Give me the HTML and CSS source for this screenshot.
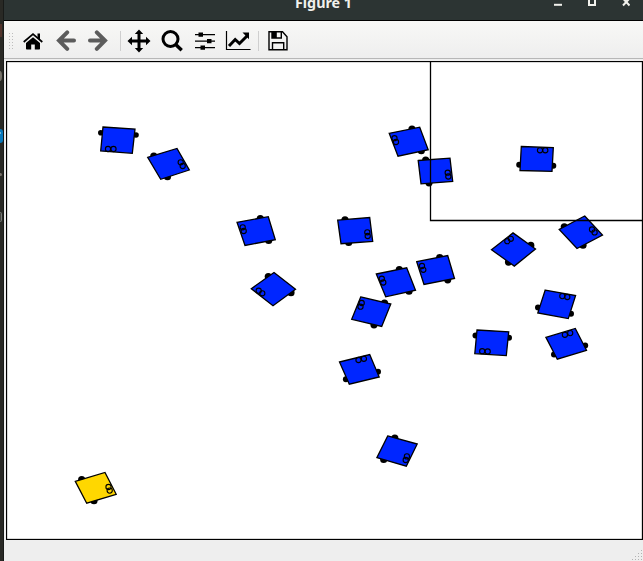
FILE: index.html
```
<!DOCTYPE html>
<html lang="en">
<head>
<meta charset="utf-8">
<title>Figure 1</title>
<link rel="stylesheet" href="styles.css">
</head>
<body>
<div class="desktop">
  <aside class="dock">
    <svg width="4" height="561" viewBox="0 0 4 561">
      <path d="M0 24h2v13H0z" fill="#51332b"/>
      <ellipse cx="0" cy="76" rx="2" ry="5" fill="#77736a"/>
      <rect x="-10" y="129" width="13" height="14" rx="3" fill="#0879bd"/>
      <path d="M0 133h1" stroke="#d8edf8"/>
      <circle cx="0.5" cy="174.500" r="1.500" fill="#77716a"/>
      <rect x="-7" y="212.500" width="8.500" height="9" rx="1" fill="#454541" stroke="#777a77"/>
    </svg>
  </aside>
  <main class="window">
    <header class="titlebar">
      <span class="title">Figure 1</span>
      <svg class="controls" width="76" height="10" viewBox="0 0 76 10" fill="none" stroke="#f1f1ec">
        <path d="M0 4.800h8" stroke-width="2"/>
        <path d="M35 -2v7h6v-7" stroke-width="2"/>
        <path d="M69 5.500l6.500-7M69 -1.500l6.500 7" stroke-width="2"/>
      </svg>
    </header>
    <nav class="toolbar">
      <svg class="grip" width="6" height="18" viewBox="0 0 6 18" stroke="#bdbdbd" stroke-dasharray="1 2"><path d="M1.500 1v17M4.500 1v17"/></svg>
      <svg class="icon home" width="22" height="22" viewBox="0 0 22 22">
        <path d="M11 7.300 4 13v5.700q0 .8.800.8h4.400v-5h3.600v5h4.400q.8 0 .8-.8V13z"/>
        <path d="M1.700 12 11 4.200l9.300 7.800" fill="none" stroke="#000" stroke-width="1.700"/>
        <path d="M15.500 3.500H18V10l-2.500-2.500z"/>
      </svg>
      <svg class="icon back" width="22" height="22" viewBox="0 0 22 22" fill="none" stroke="#5c5c5c" stroke-width="4"><path d="M12.200 2.300 4 10.600l8.200 8.200M4.500 10.600H19" stroke-linecap="round"/></svg>
      <svg class="icon forward" width="22" height="22" viewBox="0 0 22 22" fill="none" stroke="#5c5c5c" stroke-width="4"><path d="M9.800 2.300l8.200 8.300-8.200 8.200M17.500 10.600H3" stroke-linecap="round"/></svg>
      <span class="divider d1"></span>
      <svg class="icon pan" width="24" height="24" viewBox="0 0 24 24"><path d="M12 .500l4.200 4.500h-2.700v5.500H19V7.800L23.500 12 19 16.200v-2.700h-5.500V19h2.700L12 23.500 7.800 19h2.700v-5.500H5v2.700L.500 12 5 7.800v2.700h5.500V5H7.800z"/></svg>
      <svg class="icon search" width="22" height="22" viewBox="0 0 22 22" fill="none" stroke="#000"><circle cx="9.500" cy="9" r="7.500" stroke-width="3"/><path d="M14.700 14.500l6 5.700" stroke-width="3.500"/></svg>
      <svg class="icon sliders" width="22" height="22" viewBox="0 0 22 22"><path d="M1 4h20v1.300H1zM1 10.500h20v1.300H1zM1 17h20v1.300H1z"/><path d="M4.500 2.500H9v4.300H4.500zM13 9h4.500v4.300H13zM6.500 15.500H11v4.300H6.500z"/></svg>
      <svg class="icon chart" width="26" height="22" viewBox="0 0 26 22" fill="none" stroke="#000"><path d="M1.500 1v18.500h24" stroke-width="1.200"/><path d="M4 16l6.200-6.500 4.300 4L22 6" stroke-width="3"/><path d="M17.500 2.500H24v6.700z" fill="#000" stroke="none"/></svg>
      <span class="divider d2"></span>
      <svg class="icon save" width="22" height="22" viewBox="0 0 22 22" fill="none" stroke="#000" stroke-width="1.400"><path d="M2 1.700h13.500l4.500 5v13H2z"/><path d="M5.500 19v-6.300h11.200V19M14.300 2v6H5V2"/><path d="M5 2h4.800v6H5z" fill="#000" stroke="none"/></svg>
    </nav>
    <section class="figure">
      <svg class="plot" width="637" height="479" viewBox="6 61 637 479">
        <rect class="frame" x="6.500" y="61.500" width="636" height="478"/>
        <g class="robot">
          <g class="wheels"><circle cx="100.800" cy="132.700" r="2.800"/><circle cx="136" cy="135" r="2.800"/></g>
          <path d="M103 127l32 2-2.700 24.300L100.700 151z"/><circle cx="108" cy="149" r="2.600"/><circle cx="113.500" cy="149" r="2.600"/>
        </g>
        <g class="robot">
          <g class="wheels"><circle cx="153.800" cy="156" r="3.600"/><circle cx="167.500" cy="176.700" r="3.600"/></g>
          <path d="M147.700 157.300L177 148.500 189.300 170 160.700 179.300z"/><circle cx="180.700" cy="162.300" r="2.600"/><circle cx="182.700" cy="166" r="2.600"/>
        </g>
        <g class="robot">
          <g class="wheels"><circle cx="260.300" cy="218.500" r="3.600"/><circle cx="268.700" cy="240.500" r="3.600"/></g>
          <path d="M237 222.300L268.300 216.700 275.300 239.700 245 245.500z"/><circle cx="242.700" cy="227.300" r="2.600"/><circle cx="243.700" cy="231" r="2.600"/>
        </g>
        <g class="robot">
          <g class="wheels"><circle cx="345" cy="219.900" r="3.600"/><circle cx="348.700" cy="242.500" r="3.600"/></g>
          <path d="M337.700 220.200L369.700 217.500 372.700 241.300 341 243.700z"/><circle cx="367.300" cy="232.300" r="2.600"/><circle cx="367.700" cy="236" r="2.600"/>
        </g>
        <g class="robot">
          <g class="wheels"><circle cx="268.300" cy="276.600" r="3.600"/><circle cx="291" cy="292.700" r="3.600"/></g>
          <path d="M274 272.500L295.500 289.300 273 305.800 251.300 288.700z"/><circle cx="258.700" cy="290.700" r="2.600"/><circle cx="262.300" cy="293.300" r="2.600"/>
        </g>
        <g class="robot">
          <g class="wheels"><circle cx="412" cy="129.100" r="3.600"/><circle cx="421.300" cy="150.700" r="3.600"/></g>
          <path d="M389.200 133.300L419.700 127.200 428.200 149.700 398 156.200z"/><circle cx="394.500" cy="138.200" r="2.600"/><circle cx="396" cy="142" r="2.600"/>
        </g>
        <g class="robot">
          <g class="wheels"><circle cx="425.700" cy="160.200" r="3.600"/><circle cx="429" cy="182.800" r="3.600"/></g>
          <path d="M418.200 160.500L450 158.200 452.700 181.500 421 183.800z"/><circle cx="447.700" cy="172.700" r="2.600"/><circle cx="448.300" cy="176.500" r="2.600"/>
        </g>
        <g class="robot">
          <g class="wheels"><circle cx="519.200" cy="164.700" r="3"/><circle cx="553.300" cy="165.700" r="3"/></g>
          <path d="M521.300 146.500L553.300 147.700 552 171.300 520 170.500z"/><circle cx="540" cy="150.300" r="2.600"/><circle cx="545.300" cy="150.300" r="2.600"/>
        </g>
        <g class="robot">
          <g class="wheels"><circle cx="439.700" cy="257.500" r="3.600"/><circle cx="447.700" cy="279.800" r="3.600"/></g>
          <path d="M416.700 261.700L447.700 255.500 454.500 278.500 424 284.500z"/><circle cx="422" cy="266" r="2.600"/><circle cx="423.300" cy="269.800" r="2.600"/>
        </g>
        <g class="robot">
          <g class="wheels"><circle cx="399.300" cy="269.700" r="3.600"/><circle cx="409" cy="291.200" r="3.600"/></g>
          <path d="M376.300 274L406.700 267.800 415.500 290.200 385.700 296.800z"/><circle cx="381.800" cy="278.700" r="2.600"/><circle cx="383.300" cy="282.500" r="2.600"/>
        </g>
        <g class="robot">
          <g class="wheels"><circle cx="384.500" cy="303.200" r="3.600"/><circle cx="374" cy="324.800" r="3.600"/></g>
          <path d="M360.700 296.900L390.800 304 381.700 326.500 351.700 319.300z"/><circle cx="361.700" cy="303" r="2.600"/><circle cx="360.500" cy="306.700" r="2.600"/>
        </g>
        <g class="robot">
          <g class="wheels"><circle cx="345.900" cy="379.200" r="3"/><circle cx="378" cy="371.700" r="3"/></g>
          <path d="M339.500 362L369.700 354.500 379.200 377 349.300 384.200z"/><circle cx="358.500" cy="360" r="2.600"/><circle cx="363.900" cy="358.800" r="2.600"/>
        </g>
        <g class="robot">
          <g class="wheels"><circle cx="394.800" cy="438" r="3.600"/><circle cx="383.700" cy="459.500" r="3.600"/></g>
          <path d="M387.700 435.900L417.200 444 406.300 466.200 376.900 457.700z"/><circle cx="406.900" cy="456.400" r="2.600"/><circle cx="405.700" cy="460" r="2.600"/>
        </g>
        <g class="robot">
          <g class="wheels"><circle cx="530.800" cy="245.400" r="3.600"/><circle cx="508.500" cy="262.100" r="3.600"/></g>
          <path d="M513 232.900L535.500 249 514.300 266.100 491.500 249.700z"/><circle cx="507.300" cy="241.200" r="2.600"/><circle cx="510.800" cy="238.800" r="2.600"/>
        </g>
        <g class="robot">
          <g class="wheels"><circle cx="564.300" cy="226.800" r="3.600"/><circle cx="583" cy="245.200" r="3.600"/></g>
          <path d="M584.700 216L602.500 235 577 248.500 559.200 229.400z"/><circle cx="592" cy="229.500" r="2.600"/><circle cx="594.600" cy="232.400" r="2.600"/>
        </g>
        <g class="robot">
          <g class="wheels"><circle cx="538" cy="307.500" r="3"/><circle cx="571" cy="313.700" r="3"/></g>
          <path d="M545.200 290.100L575.600 295.500 568.300 318.600 537.800 313z"/><circle cx="562.300" cy="296.100" r="2.600"/><circle cx="567.300" cy="297" r="2.600"/>
        </g>
        <g class="robot">
          <g class="wheels"><circle cx="475.500" cy="335.500" r="3"/><circle cx="509" cy="337.700" r="3"/></g>
          <path d="M477 330L508.700 331.800 506.300 355.600 474.800 353.600z"/><circle cx="482.200" cy="351.200" r="2.600"/><circle cx="487.700" cy="351.500" r="2.600"/>
        </g>
        <g class="robot">
          <g class="wheels"><circle cx="554" cy="354.500" r="3"/><circle cx="585.200" cy="345.500" r="3"/></g>
          <path d="M545.900 337.400L575.300 328.500 586.500 350.300 557.300 359.200z"/><circle cx="564.900" cy="334.800" r="2.600"/><circle cx="570.200" cy="333.100" r="2.600"/>
        </g>
        <g class="robot leader">
          <g class="wheels"><circle cx="81.700" cy="479.700" r="3.600"/><circle cx="94" cy="500.700" r="3.600"/></g>
          <path d="M75.300 481.400L105 472.500 116.200 494.300 86.700 503.200z"/><circle cx="108.500" cy="487" r="2.600"/><circle cx="109.700" cy="490.600" r="2.600"/>
        </g>
        <path class="region" d="M430.500 61.500V220.500H642.500"/>
      </svg>
    </section>
    <footer class="statusbar">
      <svg width="12" height="12" viewBox="0 0 12 12" fill="#b2b2b2"><path d="M10 1h1v1h-1zM7 4h1v1H7zM10 4h1v1h-1zM4 7h1v1H4zM7 7h1v1H7zM10 7h1v1h-1zM1 10h1v1H1zM4 10h1v1H4zM7 10h1v1H7zM10 10h1v1h-1z"/></svg>
    </footer>
  </main>
</div>
</body>
</html>
```
FILE: styles.css
```
* { box-sizing: border-box; }
body { margin: 0; overflow: hidden; }
svg { display: block; flex: none; }
.desktop { display: flex; width: 643px; height: 561px; }
.dock { width: 4px; flex: none; background: #292925; border-right: 1px solid #181a18; overflow: hidden; }
.window { width: 639px; display: flex; flex-direction: column; background: #eee; }
.titlebar {
  height: 21px; flex: none; display: flex; justify-content: space-between;
  padding: 0 13px 0 291px; overflow: hidden;
  background: #2c3433; border-bottom: 1px solid #000;
}
.title {
  margin-top: -7px; height: 20px; white-space: nowrap;
  font: bold 14.3px/20px "Noto Sans", "Open Sans", sans-serif; color: #f1f1ec;
}
.toolbar {
  height: 38px; flex: none; display: flex; align-items: center;
  padding: 2px 0 0 4px;
  background: linear-gradient(#f8f8f6, #eeeeee); border-bottom: 1px solid #b7b7b7;
}
.home { margin-left: 8px; }
.back { margin-left: 11px; }
.forward { margin-left: 10px; }
.divider { width: 1px; height: 20px; background: #cfcfcf; }
.d1 { margin-left: 11px; }
.pan { margin-left: 6px; }
.search { margin-left: 10px; }
.sliders { margin-left: 11px; }
.chart { margin-left: 9px; }
.d2 { margin-left: 7px; }
.save { margin-left: 8px; }
.figure { padding: 2px 0 0 2px; flex: none; }
.plot { background: #fff; }
.frame, .region { fill: none; stroke: #000; stroke-width: 1.3; }
.robot path { fill: #0026ff; stroke: #000; stroke-width: 1.3; }
.robot > circle { fill: none; stroke: #000; stroke-width: 1.1; }
.leader path { fill: #ffd700; }
.wheels { fill: #000; }
.statusbar { flex: 1; display: flex; justify-content: flex-end; align-items: flex-end; background: #eee; }
```
